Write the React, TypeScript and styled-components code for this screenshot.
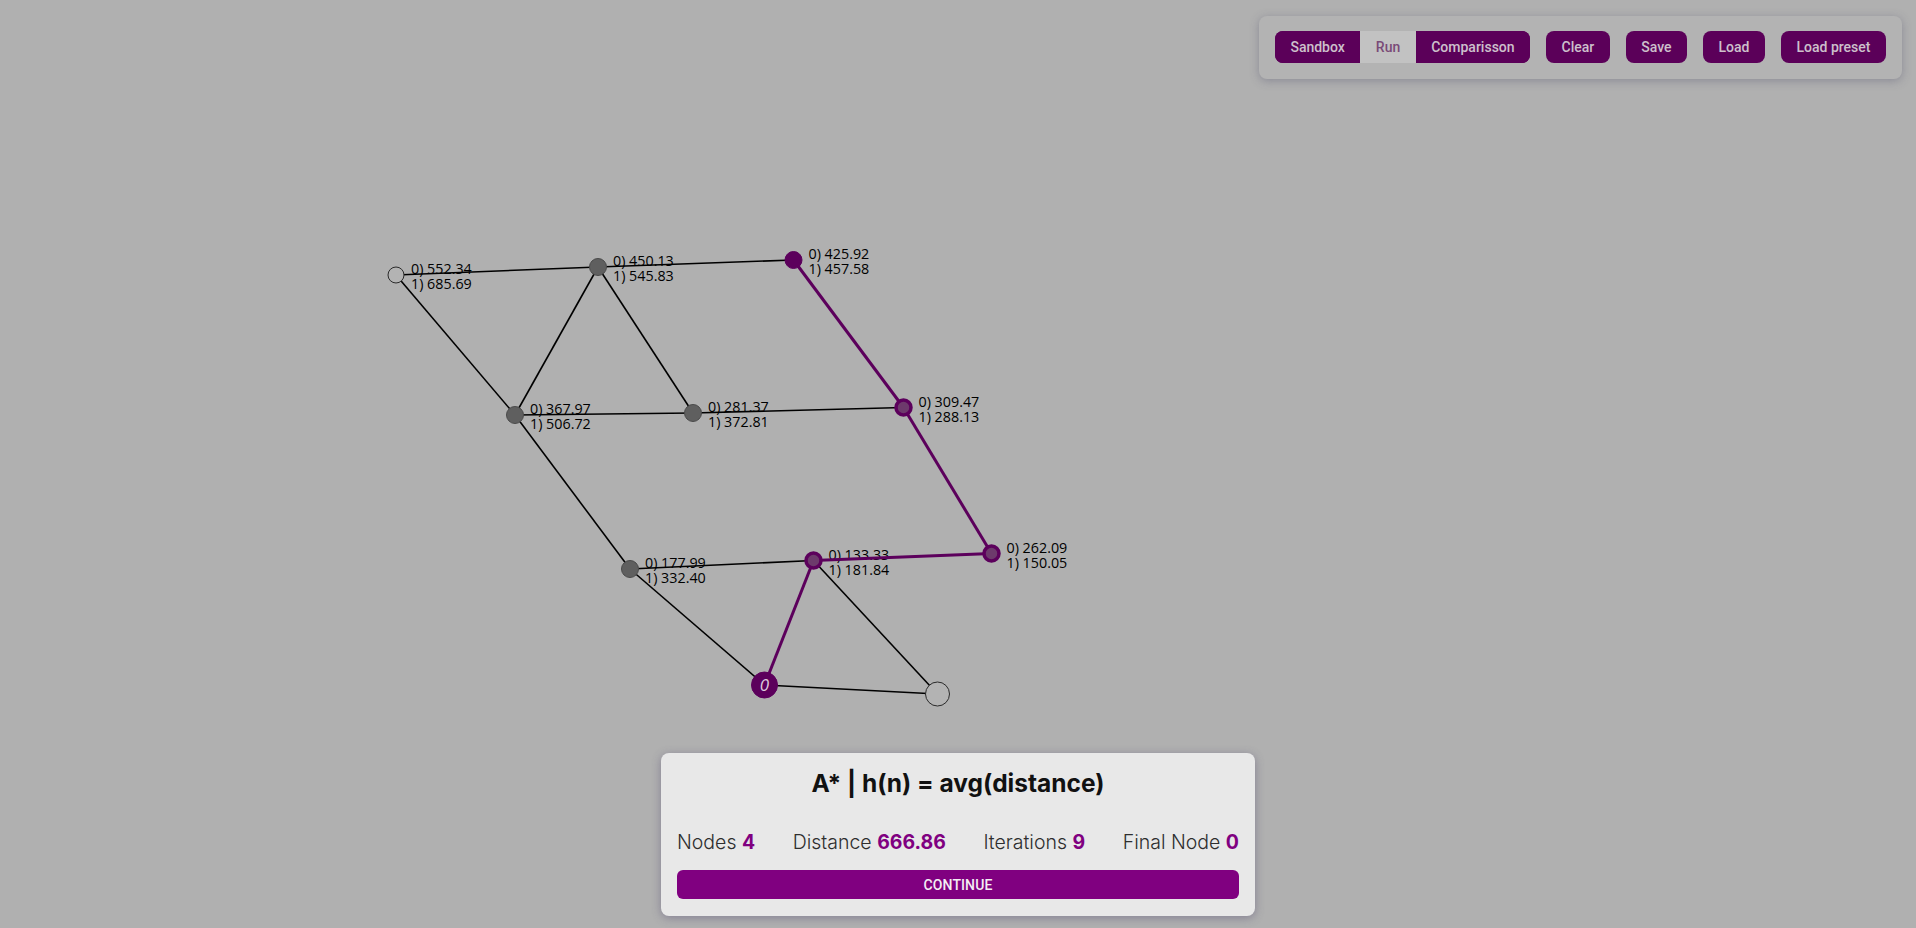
import React from "react";
import styled, { createGlobalStyle } from "styled-components";

const GlobalStyle = createGlobalStyle`
  html, body { margin: 0; padding: 0; }
  body { background: #b0b0b0; font-family: "Roboto", "Liberation Sans", sans-serif; overflow: hidden; }
`;

const Page = styled.div`
  position: relative;
  width: 1916px;
  height: 928px;
  background: #b0b0b0;
  overflow: hidden;
`;

const Canvas = styled.svg`
  display: block;
  width: 1916px;
  height: 928px;
`;

const Toolbar = styled.div`
  position: absolute;
  top: 16px;
  right: 14px;
  display: flex;
  align-items: center;
  gap: 16px;
  padding: 15px 16px 16px 16px;
  background: #b3b3b3;
  border-radius: 8px;
  box-shadow: 0 2px 10px rgba(70, 70, 100, 0.35);
`;

const Segmented = styled.div`
  display: flex;
  height: 32px;
  border-radius: 8px;
  overflow: hidden;
  background: #5b0059;
`;

const Segment = styled.button<{ $active?: boolean }>`
  border: none;
  margin: 0;
  padding: 0 15.5px;
  height: 32px;
  font-family: "Roboto", "Liberation Sans", sans-serif;
  font-size: 14px;
  font-weight: 500;
  color: ${(p) => (p.$active ? "#7a4a78" : "#cdc0cc")};
  background: ${(p) => (p.$active ? "#c2c2c2" : "#5b0059")};
  cursor: pointer;
`;

const ToolButton = styled.button`
  border: none;
  margin: 0;
  padding: 0 15.5px;
  height: 32px;
  border-radius: 8px;
  font-family: "Roboto", "Liberation Sans", sans-serif;
  font-size: 14px;
  font-weight: 500;
  color: #cdc0cc;
  background: #5b0059;
  cursor: pointer;
`;

const ResultCard = styled.div`
  position: absolute;
  left: 50%;
  bottom: 12px;
  transform: translateX(-50%);
  width: 562px;
  padding: 16px 16px 17px 16px;
  background: #e8e8e8;
  border-radius: 8px;
  box-shadow: 0 2px 10px rgba(80, 70, 110, 0.45);
  display: flex;
  flex-direction: column;
`;

const Title = styled.div`
  font-family: "Inter", "Noto Sans", sans-serif;
  font-size: 24.5px;
  line-height: 28px;
  font-weight: 700;
  color: #111;
  text-align: center;
`;

const Stats = styled.div`
  margin-top: 33px;
  display: flex;
  justify-content: space-between;
  align-items: center;
  font-family: "Inter", "Noto Sans", sans-serif;
  font-size: 19.5px;
  line-height: 24px;
  font-weight: 300;
  color: #2e2e2e;
`;

const Stat = styled.span``;

const Value = styled.b`
  font-weight: 700;
  color: #800080;
`;

const ContinueButton = styled.button`
  margin-top: 16px;
  height: 29px;
  border: none;
  border-radius: 6px;
  background: #800080;
  color: #f4eef4;
  font-family: "Roboto", "Liberation Sans", sans-serif;
  font-size: 14px;
  font-weight: 500;
  letter-spacing: 0.1px;
  cursor: pointer;
`;

type Kind = "white" | "grey" | "purple" | "ring" | "start";
interface GNode {
  id: string;
  x: number;
  y: number;
  kind: Kind;
  r: number;
  labels?: [string, string];
}

const nodes: GNode[] = [
  { id: "A", x: 396, y: 275, kind: "white", r: 8, labels: ["552.34", "685.69"] },
  { id: "B", x: 598, y: 267, kind: "grey", r: 8.5, labels: ["450.13", "545.83"] },
  { id: "C", x: 793.5, y: 260, kind: "purple", r: 8.5, labels: ["425.92", "457.58"] },
  { id: "D", x: 515, y: 415, kind: "grey", r: 8.5, labels: ["367.97", "506.72"] },
  { id: "E", x: 693, y: 413, kind: "grey", r: 8.5, labels: ["281.37", "372.81"] },
  { id: "F", x: 903.5, y: 407.5, kind: "ring", r: 7.5, labels: ["309.47", "288.13"] },
  { id: "G", x: 630, y: 569, kind: "grey", r: 8.5, labels: ["177.99", "332.40"] },
  { id: "H", x: 813.5, y: 560.5, kind: "ring", r: 7.5, labels: ["133.33", "181.84"] },
  { id: "I", x: 991.5, y: 553.5, kind: "ring", r: 7.5, labels: ["262.09", "150.05"] },
  { id: "J", x: 764.5, y: 685, kind: "start", r: 13 },
  { id: "K", x: 937.5, y: 694, kind: "white", r: 12 },
];

const byId = (id: string) => nodes.find((n) => n.id === id)!;

const blackEdges: [string, string][] = [
  ["A", "B"],
  ["B", "C"],
  ["A", "D"],
  ["B", "D"],
  ["B", "E"],
  ["D", "E"],
  ["E", "F"],
  ["D", "G"],
  ["G", "H"],
  ["G", "J"],
  ["H", "K"],
  ["J", "K"],
];

const pathEdges: [string, string][] = [
  ["C", "F"],
  ["F", "I"],
  ["I", "H"],
  ["H", "J"],
];

const PURPLE = "#5c005c";

const nodeStyle = (k: Kind) => {
  switch (k) {
    case "white":
      return { fill: "#b3b3b3", stroke: "#2a2a2a", strokeWidth: 1 };
    case "grey":
      return { fill: "#5f5f5f", stroke: "#4a4a4a", strokeWidth: 1 };
    case "purple":
      return { fill: PURPLE, stroke: PURPLE, strokeWidth: 1 };
    case "ring":
      return { fill: "#6d3a6c", stroke: PURPLE, strokeWidth: 3.5 };
    case "start":
      return { fill: PURPLE, stroke: PURPLE, strokeWidth: 1 };
  }
};

const Graph: React.FC = () => (
  <Canvas viewBox="0 0 1916 928" xmlns="http://www.w3.org/2000/svg">
    <g fontFamily='"Open Sans", "Liberation Sans", sans-serif' fontSize="14.3" fill="#000">
      {nodes
        .filter((n) => n.labels)
        .map((n) => (
          <g key={`l-${n.id}`}>
            <text x={n.x + 15} y={n.y - 1}>{`0) ${n.labels![0]}`}</text>
            <text x={n.x + 15} y={n.y + 14}>{`1) ${n.labels![1]}`}</text>
          </g>
        ))}
    </g>
    {blackEdges.map(([a, b]) => {
      const p = byId(a);
      const q = byId(b);
      return <line key={a + b} x1={p.x} y1={p.y} x2={q.x} y2={q.y} stroke="#000" strokeWidth={1.6} />;
    })}
    {pathEdges.map(([a, b]) => {
      const p = byId(a);
      const q = byId(b);
      return <line key={a + b} x1={p.x} y1={p.y} x2={q.x} y2={q.y} stroke={PURPLE} strokeWidth={3} />;
    })}
    {nodes.map((n) => {
      const s = nodeStyle(n.kind);
      return <circle key={n.id} cx={n.x} cy={n.y} r={n.r} fill={s.fill} stroke={s.stroke} strokeWidth={s.strokeWidth} />;
    })}
    <text
      x={byId("J").x}
      y={byId("J").y + 6}
      textAnchor="middle"
      fontFamily='"Open Sans", "Liberation Sans", sans-serif'
      fontSize="17"
      fontStyle="italic"
      fill="#dccbdc"
    >
      0
    </text>
  </Canvas>
);

export default function App() {
  return (
    <Page>
      <GlobalStyle />
      <Graph />
      <Toolbar>
        <Segmented>
          <Segment>Sandbox</Segment>
          <Segment $active>Run</Segment>
          <Segment>Comparisson</Segment>
        </Segmented>
        <ToolButton>Clear</ToolButton>
        <ToolButton>Save</ToolButton>
        <ToolButton>Load</ToolButton>
        <ToolButton>Load preset</ToolButton>
      </Toolbar>
      <ResultCard>
        <Title>A* | h(n) = avg(distance)</Title>
        <Stats>
          <Stat>
            Nodes <Value>4</Value>
          </Stat>
          <Stat>
            Distance <Value>666.86</Value>
          </Stat>
          <Stat>
            Iterations <Value>9</Value>
          </Stat>
          <Stat>
            Final Node <Value>0</Value>
          </Stat>
        </Stats>
        <ContinueButton>CONTINUE</ContinueButton>
      </ResultCard>
    </Page>
  );
}
